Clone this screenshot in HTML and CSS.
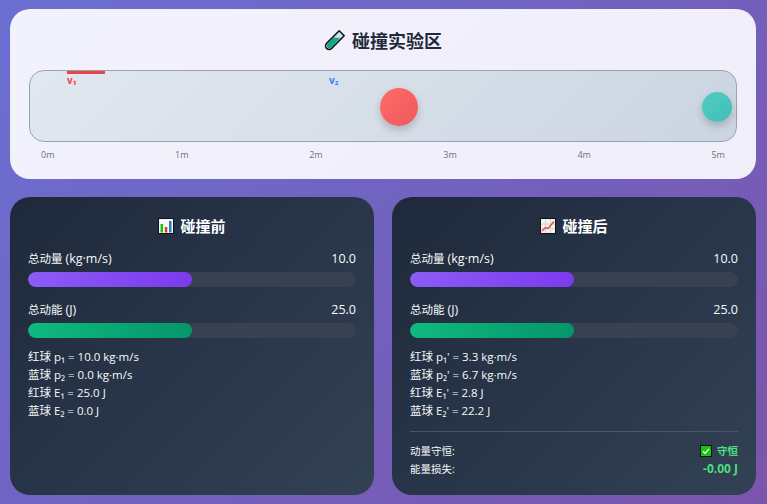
FILE: index.html
```html
<!DOCTYPE html>
<html lang="zh-CN">
<head>
    <meta charset="UTF-8">
    <meta name="viewport" content="width=device-width, initial-scale=1.0">
    <title>碰撞实验区</title>
    <link rel="stylesheet" href="styles.css">
</head>
<body>
    <section class="lab">
        <h1 class="lab-title">
            <svg class="icon-tube" viewBox="0 0 22 22">
                <path d="M15.2 1.8 20.2 6.8 7.6 19.4a3.5 3.5 0 0 1-5-5z" fill="#c5e6f2" stroke="#111" stroke-width="1.5" stroke-linejoin="round"/>
                <path d="M9.500 8.500 16 9 7.200 18.600a2.600 2.600 0 0 1-3.700-3.700z" fill="#0fa98a"/>
            </svg>
            碰撞实验区
        </h1>
        <div class="track">
            <div class="arrow arrow-red"></div>
            <span class="arrow-label label-red">v₁</span>
            <span class="arrow-label label-blue">v₂</span>
            <div class="ball ball-red"></div>
            <div class="ball ball-teal"></div>
        </div>
        <div class="scale">
            <span>0m</span><span>1m</span><span>2m</span><span>3m</span><span>4m</span><span>5m</span>
        </div>
    </section>

    <div class="panels">
        <section class="panel">
            <h2 class="panel-title">
                <svg class="icon-chart" viewBox="0 0 16 16">
                    <rect x="0.5" y="0.5" width="15" height="15" fill="#f4f6f8" stroke="#111"/>
                    <rect x="2.5" y="6" width="2.5" height="8.5" fill="#16c60c"/>
                    <rect x="6.8" y="9" width="2.5" height="5.5" fill="#e8391f"/>
                    <rect x="11" y="3" width="2.5" height="11.5" fill="#1a83d6"/>
                </svg>
                碰撞前
            </h2>
            <div class="stat-row"><span>总动量 <span class="unit">(kg·m/s)</span></span><span class="stat-value">10.0</span></div>
            <div class="bar"><div class="bar-fill fill-purple" style="width: 50%"></div></div>
            <div class="stat-row"><span>总动能 <span class="unit">(J)</span></span><span class="stat-value">25.0</span></div>
            <div class="bar"><div class="bar-fill fill-green" style="width: 50%"></div></div>
            <div class="details">
                <div>红球 p₁ = 10.0 kg·m/s</div>
                <div>蓝球 p₂ = 0.0 kg·m/s</div>
                <div>红球 E₁ = 25.0 J</div>
                <div>蓝球 E₂ = 0.0 J</div>
            </div>
        </section>

        <section class="panel">
            <h2 class="panel-title">
                <svg class="icon-chart" viewBox="0 0 16 16">
                    <rect x="0.5" y="0.5" width="15" height="15" fill="#f1f1f1" stroke="#111"/>
                    <path d="M1 6H15M1 10.5H15M5.500 1V15M10.500 1V15" stroke="#d4d4d4" stroke-width="1"/>
                    <path d="M2 13 5.500 9.500 8 10.500 14 3.500" fill="none" stroke="#ef4a2c" stroke-width="1.400"/>
                </svg>
                碰撞后
            </h2>
            <div class="stat-row"><span>总动量 <span class="unit">(kg·m/s)</span></span><span class="stat-value">10.0</span></div>
            <div class="bar"><div class="bar-fill fill-purple" style="width: 50%"></div></div>
            <div class="stat-row"><span>总动能 <span class="unit">(J)</span></span><span class="stat-value">25.0</span></div>
            <div class="bar"><div class="bar-fill fill-green" style="width: 50%"></div></div>
            <div class="details">
                <div>红球 p₁' = 3.3 kg·m/s</div>
                <div>蓝球 p₂' = 6.7 kg·m/s</div>
                <div>红球 E₁' = 2.8 J</div>
                <div>蓝球 E₂' = 22.2 J</div>
            </div>
            <div class="summary">
                <div class="summary-row">
                    <span>动量守恒:</span>
                    <span class="ok">
                        <svg class="icon-check" viewBox="0 0 12 12">
                            <rect x="0.5" y="0.5" width="11" height="11" fill="#16c60c" stroke="#111"/>
                            <path d="M3 6.200 5.200 8.400 9 3.800" fill="none" stroke="#fff" stroke-width="1.300"/>
                        </svg>
                        守恒
                    </span>
                </div>
                <div class="summary-row">
                    <span>能量损失:</span>
                    <span class="ok ok-bold">-0.00 J</span>
                </div>
            </div>
        </section>
    </div>
</body>
</html>
```

FILE: styles.css
```css
* {
    box-sizing: border-box;
}
html, body {
    height: 100%;
}
body {
    margin: 0;
    padding: 9px 11px 9px 10px;
    font-family: "Open Sans", "Noto Sans CJK SC", sans-serif;
    background: linear-gradient(135deg, #6a6fd2 0%, #7a55ac 100%);
    display: flex;
    flex-direction: column;
    gap: 18px;
}
.lab {
    flex: none;
    height: 170px;
    padding: 20px 19px 0;
    background: linear-gradient(135deg, #f2f2fc, #f0eef9);
    border-radius: 20px;
}
.lab-title {
    margin: 0 0 19px;
    height: 22px;
    display: flex;
    align-items: center;
    justify-content: center;
    gap: 6px;
    font-size: 18px;
    font-weight: 700;
    color: #1e293b;
}
.icon-tube {
    width: 22px;
    height: 22px;
}
.track {
    position: relative;
    height: 72px;
    background: linear-gradient(135deg, #e2e8f0, #cbd5e1);
    border: 1px solid #94a3b8;
    border-radius: 15px;
}
.arrow {
    position: absolute;
    top: 0;
    left: 37px;
    width: 38px;
    height: 3px;
}
.arrow-red {
    background: #ef4444;
}
.arrow-label {
    position: absolute;
    top: 3px;
    font-size: 10px;
    font-weight: 700;
    line-height: 12px;
}
.label-red {
    left: 37px;
    color: #ef4444;
}
.label-blue {
    left: 299px;
    color: #3b82f6;
}
.ball {
    position: absolute;
    border-radius: 50%;
    box-shadow: 0 4px 8px rgba(0, 0, 0, 0.2);
}
.ball-red {
    left: 350px;
    top: 17px;
    width: 38px;
    height: 38px;
    background: linear-gradient(135deg, #ff6b6b, #ee5a5a);
}
.ball-teal {
    left: 672px;
    top: 21px;
    width: 30px;
    height: 30px;
    background: linear-gradient(135deg, #4ecdc4, #44bdb5);
}
.scale {
    display: flex;
    justify-content: space-between;
    padding: 0 12px;
    margin-top: 6px;
    font-size: 9px;
    line-height: 14px;
    color: #6b7280;
}
.panels {
    flex: 1;
    min-height: 0;
    display: grid;
    grid-template-columns: 1fr 1fr;
    gap: 18px;
}
.panel {
    padding: 18px 18px 0;
    background: linear-gradient(135deg, #1e293b, #334155);
    border-radius: 20px;
    color: #f8fafc;
}
.panel-title {
    margin: -1px 0 14px;
    height: 22px;
    display: flex;
    align-items: center;
    justify-content: center;
    gap: 6px;
    font-size: 15px;
    font-weight: 700;
    color: #fff;
}
.icon-chart {
    width: 16px;
    height: 16px;
    margin-top: 2px;
}
.stat-row {
    display: flex;
    justify-content: space-between;
    font-size: 11.500px;
    line-height: 18px;
    margin-bottom: 4px;
}
.unit, .stat-value {
    font-size: 12.500px;
}
.bar {
    height: 15px;
    margin-bottom: 14px;
    background: #374151;
    border-radius: 8px;
    overflow: hidden;
}
.bar-fill {
    height: 100%;
    border-radius: 8px;
}
.fill-purple {
    background: linear-gradient(90deg, #8b5cf6, #7c3aed);
}
.fill-green {
    background: linear-gradient(90deg, #10b981, #059669);
}
.details {
    font-size: 11.500px;
    line-height: 18px;
    margin-top: -4px;
}
.summary {
    margin-top: 11px;
    padding-top: 10px;
    border-top: 1px solid #4b5563;
    font-size: 10.500px;
    line-height: 18px;
}
.summary-row {
    display: flex;
    justify-content: space-between;
}
.ok {
    display: flex;
    align-items: center;
    gap: 5px;
    color: #4ade80;
    font-weight: 600;
}
.ok-bold {
    font-size: 12px;
    font-weight: 700;
}
.icon-check {
    width: 12px;
    height: 12px;
}
```
